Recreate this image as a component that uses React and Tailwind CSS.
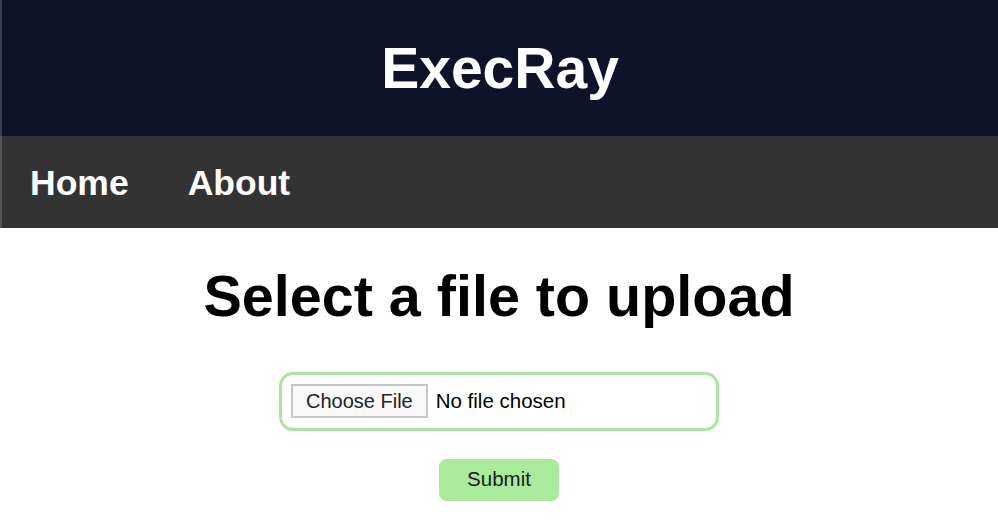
export default function App() {
  return (
    <div className="min-h-screen bg-white font-['Liberation_Sans',Arial,sans-serif]">
      {/* Header */}
      <header className="h-[136px] bg-[#0e1329] border-l-2 border-[#3a3d4a] flex items-center justify-center">
        <h1 className="text-[57px] font-bold text-white leading-none">ExecRay</h1>
      </header>

      {/* Nav */}
      <nav className="h-[92px] bg-[#333333] border-l-2 border-[#555555] flex items-center gap-[59px] pl-[28px] pt-[4px]">
        <a href="#" className="text-[35.5px] font-bold text-white leading-none">Home</a>
        <a href="#" className="text-[35.5px] font-bold text-white leading-none">About</a>
      </nav>

      {/* Upload form */}
      <main className="flex flex-col items-center">
        <h2 className="mt-[40px] text-[57.5px] font-bold text-black leading-none">Select a file to upload</h2>

        <div className="mt-[46px] w-[440px] h-[59px] border-[3px] border-[#a8e6a0] rounded-[14px] flex items-center pl-[9px]">
          <span className="h-[34px] px-[13px] flex items-center border-2 border-[#c6c6c6] bg-[#f8f8f8] text-[20px] text-[#222] leading-none">
            Choose File
          </span>
          <span className="ml-[8px] text-[20.5px] text-black leading-none">No file chosen</span>
        </div>

        <button className="mt-[28px] w-[120px] h-[42px] rounded-[8px] bg-[#a9eb9b] text-[20.5px] text-[#1a1a1a] leading-none">
          Submit
        </button>
      </main>
    </div>
  );
}
